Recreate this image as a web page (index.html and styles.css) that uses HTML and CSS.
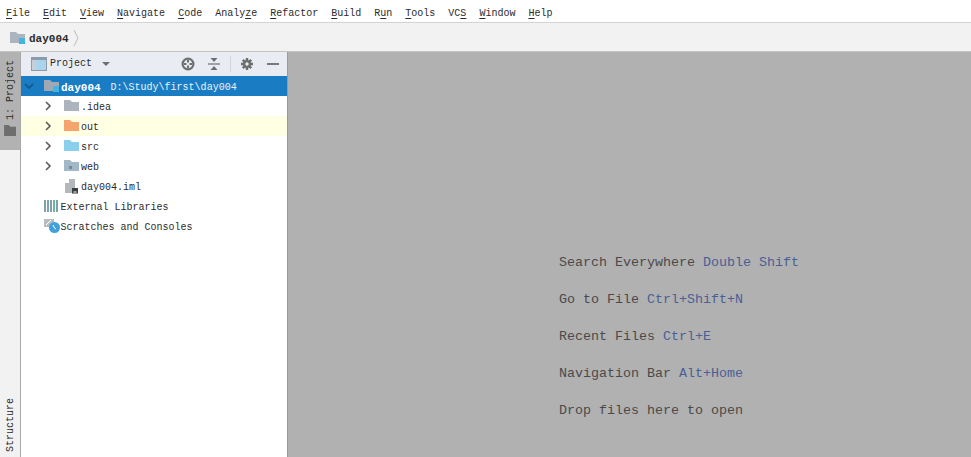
FILE: index.html
```html
<!DOCTYPE html>
<html lang="en">
<head>
<meta charset="utf-8">
<title>day004</title>
<link rel="stylesheet" href="styles.css">
</head>
<body>
<nav class="menubar">
  <span><u>F</u>ile</span><span><u>E</u>dit</span><span><u>V</u>iew</span><span><u>N</u>avigate</span><span><u>C</u>ode</span><span>Analy<u>z</u>e</span><span><u>R</u>efactor</span><span><u>B</u>uild</span><span>R<u>u</u>n</span><span><u>T</u>ools</span><span>VC<u>S</u></span><span><u>W</u>indow</span><span><u>H</u>elp</span>
</nav>
<div class="navbar">
  <svg class="ico-crumb" viewBox="0 0 16 14"><path d="M0 1h6l2 2h7v9H0z" fill="#aeb4bd"/><rect x="9" y="7" width="6" height="6" fill="#40b6e0"/></svg>
  <b class="crumb">day004</b>
  <svg class="crumb-arrow" viewBox="0 0 6 18"><path d="M1 1l4 8-4 8" fill="none" stroke="#bdbdbd"/></svg>
</div>
<div class="main">
  <aside class="strip">
    <div class="tab tab-active">
      <span class="vtext">1: Project</span>
      <svg class="tab-ico" viewBox="0 0 14 12"><path d="M0 0h5l2 2h6v10H0z" fill="#6e6e6e"/></svg>
    </div>
    <div class="tab"><span class="vtext">Structure</span></div>
  </aside>
  <section class="panel">
    <header class="panel-head">
      <svg class="ico-view" viewBox="0 0 16 14"><rect x=".5" y=".5" width="15" height="13" fill="#a9d4ec" stroke="#8f9aa8"/><rect x="1" y="1" width="14" height="2" fill="#8f9aa8"/><rect x="1" y="3" width="4" height="10" fill="#c6ced8"/></svg>
      <span class="panel-title">Project</span>
      <svg class="ico-drop" viewBox="0 0 8 4"><path d="M0 0h8L4 4z" fill="#6e6e6e"/></svg>
      <svg class="tool tool-first" viewBox="0 0 14 14"><circle cx="7" cy="7" r="5.400" fill="none" stroke="#6e6e6e" stroke-width="2.200"/><path d="M7 3v2.500M7 8.500V11M3 7h2.500M8.500 7H11" stroke="#6e6e6e" stroke-width="2"/></svg>
      <svg class="tool" viewBox="0 0 14 14"><path d="M1 7h12" stroke="#6e6e6e" stroke-width="1.200"/><path d="M3.500 1h7L7 5zM3.500 13h7L7 9z" fill="#6e6e6e"/></svg>
      <i class="sep"></i>
      <svg class="tool" viewBox="0 0 14 14"><path d="M7 1v12M1 7h12M2.800 2.800l8.400 8.400M11.200 2.800l-8.400 8.400" stroke="#6e6e6e" stroke-width="2.400"/><circle cx="7" cy="7" r="4" fill="#6e6e6e"/><circle cx="7" cy="7" r="1.700" fill="#e9ecf2"/></svg>
      <svg class="tool tool-last" viewBox="0 0 14 14"><path d="M1 7h12" stroke="#6e6e6e" stroke-width="1.800"/></svg>
    </header>
    <ul class="tree">
      <li class="row row-selected">
        <svg class="arrow" viewBox="0 0 10 10"><path d="M1 3l4 4 4-4" fill="none" stroke="#175a90" stroke-width="1.800"/></svg>
        <svg class="ico-folder" viewBox="0 0 16 14"><path d="M0 1h6l2 2h7v9H0z" fill="#9fa9b6"/><rect x="9" y="7" width="6" height="6" fill="#40b6e0"/></svg>
        <b class="name-strong">day004</b><span class="path">D:\Study\first\day004</span>
      </li>
      <li class="row">
        <svg class="arrow" viewBox="0 0 10 10"><path d="M3 1l4 4-4 4" fill="none" stroke="#5a5a5a" stroke-width="1.600"/></svg>
        <svg class="ico-folder" viewBox="0 0 16 14"><path d="M0 1h6l2 2h7v9H0z" fill="#aeb4bd"/></svg><span class="name">.idea</span>
      </li>
      <li class="row row-ignored">
        <svg class="arrow" viewBox="0 0 10 10"><path d="M3 1l4 4-4 4" fill="none" stroke="#5a5a5a" stroke-width="1.600"/></svg>
        <svg class="ico-folder" viewBox="0 0 16 14"><path d="M0 1h6l2 2h7v9H0z" fill="#f4a46c"/></svg><span class="name">out</span>
      </li>
      <li class="row">
        <svg class="arrow" viewBox="0 0 10 10"><path d="M3 1l4 4-4 4" fill="none" stroke="#5a5a5a" stroke-width="1.600"/></svg>
        <svg class="ico-folder" viewBox="0 0 16 14"><path d="M0 1h6l2 2h7v9H0z" fill="#8ad0ec"/></svg><span class="name">src</span>
      </li>
      <li class="row">
        <svg class="arrow" viewBox="0 0 10 10"><path d="M3 1l4 4-4 4" fill="none" stroke="#5a5a5a" stroke-width="1.600"/></svg>
        <svg class="ico-folder" viewBox="0 0 16 14"><path d="M0 1h6l2 2h7v9H0z" fill="#a3b8c6"/><rect x="5" y="7" width="3" height="3" fill="#6f8ba0"/></svg><span class="name">web</span>
      </li>
      <li class="row row-file">
        <svg class="ico-file" viewBox="0 0 16 16"><path d="M1 5h4V1h6v14H1z" fill="#b4b8bd"/><rect x="8" y="10" width="6" height="5.500" fill="#3c3f41"/><rect x="9.500" y="13.500" width="3" height="1" fill="#fff"/></svg><span class="name">day004.iml</span>
      </li>
      <li class="row row-root">
        <svg class="ico-lib" viewBox="0 0 16 14"><path d="M1 1v12M4 1v12M7 1v12" stroke="#7fa0ad" stroke-width="2"/><path d="M10 1v12" stroke="#6fb6a2" stroke-width="2"/><path d="M13 1v12" stroke="#7fa0ad" stroke-width="2"/></svg><span class="name-root">External Libraries</span>
      </li>
      <li class="row row-root">
        <svg class="ico-lib" viewBox="0 0 16 14"><rect x="0" y="0" width="10" height="8" fill="#b7bcc2"/><path d="M2 6l5-5" stroke="#fff"/><circle cx="10.500" cy="8.500" r="5.500" fill="#40a0dc"/><path d="M9 6l1.500 3 1.500 1" fill="none" stroke="#fff"/></svg><span class="name-root">Scratches and Consoles</span>
      </li>
    </ul>
  </section>
  <section class="editor">
    <p>Search Everywhere <span class="key">Double Shift</span></p>
    <p>Go to File <span class="key">Ctrl+Shift+N</span></p>
    <p>Recent Files <span class="key">Ctrl+E</span></p>
    <p>Navigation Bar <span class="key">Alt+Home</span></p>
    <p>Drop files here to open</p>
  </section>
</div>
</body>
</html>
```

FILE: styles.css
```css
* { box-sizing: border-box; }
html, body { margin: 0; height: 100%; overflow: hidden; }
body {
  display: flex;
  flex-direction: column;
  background: #f2f2f2;
  color: #2b2b2b;
  font: 10px/14px "Liberation Mono", monospace;
}
svg { display: block; flex: none; }
u { text-underline-offset: 2px; }

.menubar {
  display: flex;
  gap: 13px;
  align-items: center;
  height: 23px;
  padding: 5px 0 0 6px;
  background: #fff;
  border-bottom: 1px solid #d4d4d4;
}

.navbar {
  display: flex;
  align-items: center;
  height: 29px;
  padding: 2px 0 0 10px;
  background: #f2f2f2;
  border-bottom: 1px solid #c4c4c4;
}
.ico-crumb { width: 16px; height: 14px; margin-right: 3px; }
.crumb { font-size: 11px; padding-top: 2px; }
.crumb-arrow { width: 6px; height: 18px; margin-left: 4px; }

.main { flex: 1; display: flex; min-height: 0; }

.strip {
  width: 21px;
  display: flex;
  flex-direction: column;
  justify-content: space-between;
  background: #f2f2f2;
  border-right: 1px solid #a8a8a8;
}
.tab {
  display: flex;
  flex-direction: column;
  align-items: center;
  gap: 5px;
  padding: 8px 0 5px;
}
.tab-active { height: 98px; background: #b2b2b2; }
.vtext { writing-mode: vertical-rl; transform: rotate(180deg); line-height: 20px; padding-right: 2px; }
.tab-ico { width: 13px; height: 11px; }

.panel {
  width: 267px;
  flex: none;
  background: #fff;
  border-right: 1px solid #9a9a9a;
}
.panel-head {
  display: flex;
  align-items: center;
  height: 24px;
  padding-left: 10px;
  background: #e9ecf2;
}
.ico-view { width: 16px; height: 14px; margin-right: 3px; }
.panel-title { width: 52px; }
.ico-drop { width: 8px; height: 4px; }
.tool { width: 14px; height: 14px; margin-left: 12px; }
.tool-first { margin-left: 71px; }
.tool-last { margin-left: 12px; }
.sep { width: 1px; height: 16px; margin-left: 9px; background: #d2d4d8; }
.sep + .tool { margin-left: 9px; }

.tree { list-style: none; margin: 0; padding: 0; }
.row { display: flex; align-items: center; height: 20px; padding-left: 22px; white-space: pre; }
.row-selected { background: #1a7dc4; color: #fff; padding-left: 3px; }
.row-ignored { background: #ffffe4; }
.row-file { padding-left: 43px; }
.row-root { padding-left: 22.500px; }
.arrow { width: 10px; height: 10px; margin-right: 11px; }
.row-selected .arrow { margin-right: 10px; }
.ico-folder { width: 16px; height: 14px; margin-right: 1px; }
.ico-file { width: 16px; height: 16px; margin-right: 1px; }
.ico-lib { width: 16px; height: 14px; margin-right: 1px; }
.name, .name-root, .name-strong, .path { padding-top: 4px; }
.name-strong { font-size: 11px; margin-right: 10px; }
.path { color: #eaf3fa; }

.editor {
  flex: 1;
  display: flex;
  flex-direction: column;
  gap: 20px;
  padding: 202px 0 0 271px;
  background: #b1b1b1;
  color: #4a4a4a;
  font-size: 13.330px;
  line-height: 17px;
}
.editor p { margin: 0; white-space: pre; }
.key { color: #4b5f96; }
```
